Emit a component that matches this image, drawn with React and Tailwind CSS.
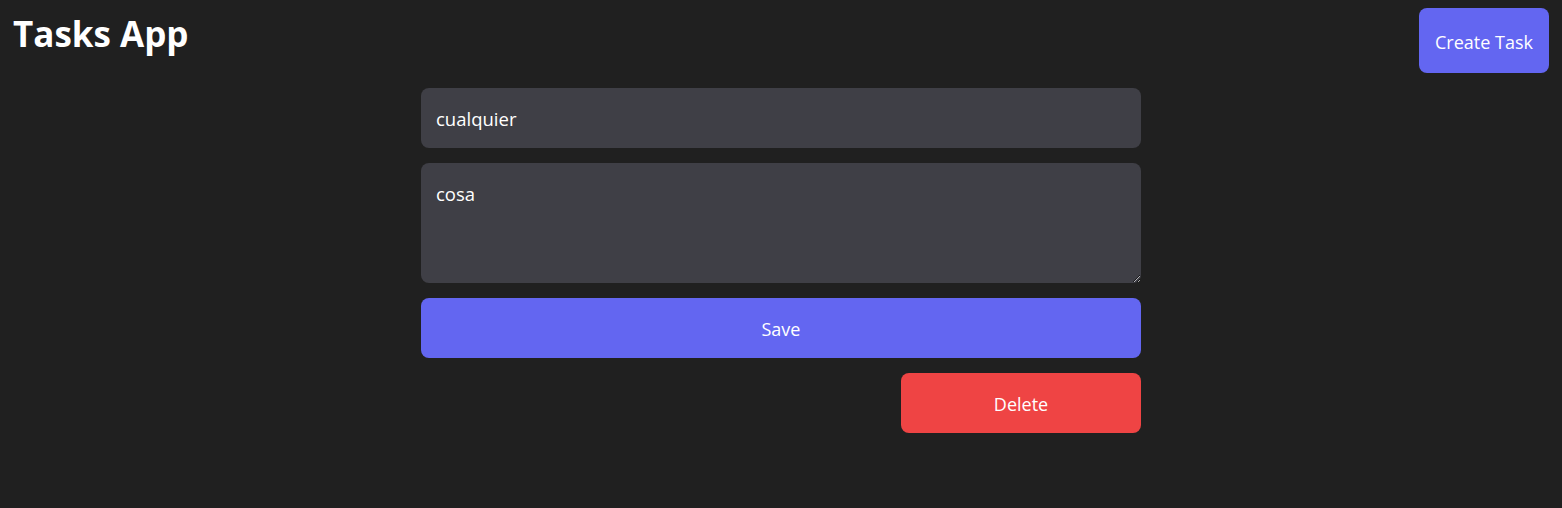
import { useState } from 'react';

const App = () => {
  const [title, setTitle] = useState('cualquier');
  const [description, setDescription] = useState('cosa');

  return (
    <div className="min-h-screen bg-[#202020] text-white font-['Open_Sans',sans-serif]">
      {/* HEADER */}
      <header className="flex justify-between items-start pl-[13px] pr-[13px] pt-2">
        <h1 className="text-[35px] leading-[50px] font-bold mt-[1px]">Tasks App</h1>
        <button className="w-[130px] h-[65px] pt-[3px] bg-[#6366f1] rounded-lg text-[18px]">
          Create Task
        </button>
      </header>

      {/* FORM */}
      <form
        onSubmit={(e) => e.preventDefault()}
        className="w-[720px] mx-auto mt-[15px] flex flex-col gap-[15px]"
      >
        <input
          value={title}
          onChange={(e) => setTitle(e.target.value)}
          className="h-[60px] bg-[#3f3f46] rounded-lg px-[15px] text-[18.5px] outline-none"
        />
        <textarea
          value={description}
          onChange={(e) => setDescription(e.target.value)}
          className="h-[120px] bg-[#3f3f46] rounded-lg px-[15px] pt-[17px] text-[18.5px] outline-none"
        />
        <button className="h-[60px] pt-[2px] bg-[#6366f1] rounded-lg text-[18px]">Save</button>
        <div className="flex justify-end">
          <button type="button" className="w-[240px] h-[60px] pt-[2px] bg-[#ef4444] rounded-lg text-[18px]">
            Delete
          </button>
        </div>
      </form>
    </div>
  );
};

export default App;
